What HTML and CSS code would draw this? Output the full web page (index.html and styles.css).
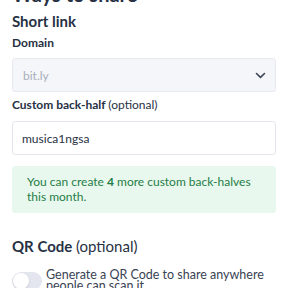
FILE: index.html
```html
<!DOCTYPE html>
<html>
<head>
<meta charset="utf-8">
<link rel="stylesheet" href="styles.css">
</head>
<body>
<div class="panel">
  <h2 class="title">Ways to share</h2>
  <h3 class="section">Short link</h3>
  <div class="label">Domain</div>
  <div class="select">
    <span class="placeholder">bit.ly</span>
    <svg class="chev" width="11" height="7" viewBox="0 0 11 7"><path d="M1.5 1.5l4 3.8 4-3.8" fill="none" stroke="#3b4456" stroke-width="1.6" stroke-linecap="round" stroke-linejoin="round"/></svg>
  </div>
  <div class="label label2">Custom back-half <span class="opt">(optional)</span></div>
  <div class="input">musica1ngsa</div>
  <div class="notice">You can create <b>4</b> more custom back-halves this month.</div>
  <h3 class="section qr">QR Code <span class="opt">(optional)</span></h3>
  <div class="toggle-row">
    <span class="toggle"><span class="knob"></span></span>
    <span class="toggle-text">Generate a QR Code to share anywhere people can scan it</span>
  </div>
</div>
</body>
</html>
```
FILE: styles.css
```css
* { box-sizing: border-box; }
html, body { margin: 0; padding: 0; background: #fff; overflow: hidden; height: 288px; }
body { font-family: "Lato", "Open Sans", sans-serif; color: #273144; }
.panel { padding: 0 12px; height: 288px; overflow: hidden; }
.title { margin: -16px 0 0; font-size: 20px; line-height: 20px; font-weight: 700; }
.section { margin: 8px 0 0; font-size: 15px; line-height: 18px; font-weight: 700; }
.label { margin-top: 6px; font-size: 12px; line-height: 14px; font-weight: 700; }
.label2 { margin-top: 6px; }
.opt { font-weight: 400; }
.select {
  margin-top: 8px; height: 34px; width: 264px;
  background: #f5f6fa; border: 1px solid #e8eaf0; border-radius: 3px;
  display: flex; align-items: center; justify-content: space-between;
  padding: 0 9px 0 10px;
}
.placeholder { font-size: 12px; color: #a8aebb; }
.input {
  margin-top: 9px; height: 34px; width: 264px;
  border: 1px solid #e4e7ed; border-radius: 3px;
  display: flex; align-items: center; padding: 0 9px;
  font-size: 12px; color: #273144;
}
.notice {
  margin-top: 11px; width: 264px; background: #e9f8ee; border-radius: 3px;
  padding: 8px 20px 9px 15px; font-size: 12px; line-height: 15px; color: #1f7d47;
}
.notice b { font-weight: 700; }
.qr { margin-top: 24px; }
.toggle-row { display: flex; gap: 4px; margin-top: 14px; align-items: flex-start; }
.toggle { flex: none; width: 30px; height: 18px; border-radius: 9px; background: #e3e6ee; position: relative; margin-top: 3px; }
.knob { position: absolute; left: 1px; top: 1px; width: 16px; height: 16px; border-radius: 50%; background: #fff; box-shadow: 0 1px 2px rgba(0,0,0,0.15); }
.toggle-text { font-size: 12.5px; line-height: 11px; color: #394354; }
```
